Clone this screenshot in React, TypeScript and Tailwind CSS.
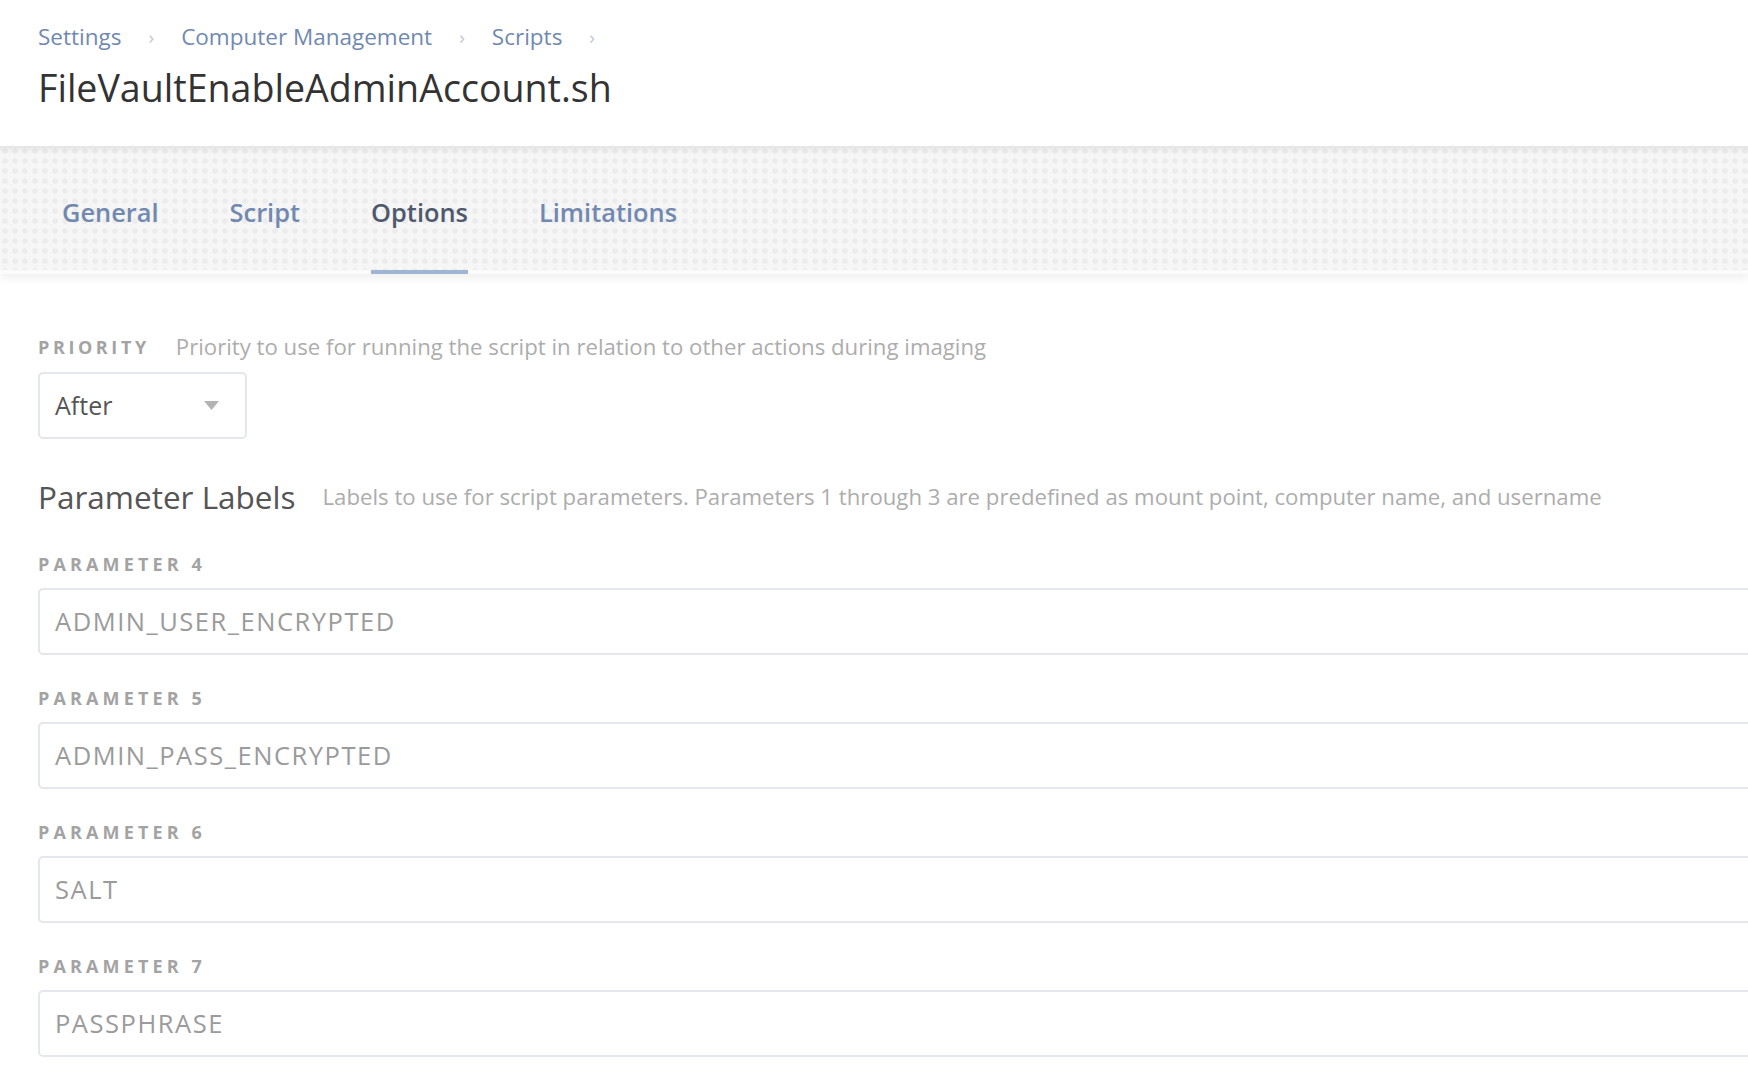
import React from 'react';

const crumbs = ['Settings', 'Computer Management', 'Scripts'];
const tabs = ['General', 'Script', 'Options', 'Limitations'];
const params = [
  { n: 4, value: 'ADMIN_USER_ENCRYPTED' },
  { n: 5, value: 'ADMIN_PASS_ENCRYPTED' },
  { n: 6, value: 'SALT' },
  { n: 7, value: 'PASSPHRASE' },
];

const App: React.FC = () => {
  return (
    <div className="w-full h-[1078px] overflow-hidden bg-white font-['Open_Sans',sans-serif]">
      {/* Header */}
      <div className="h-[146px] pl-[38px] pt-[23px] bg-white">
        <div className="flex items-center h-[28px] text-[22.5px] text-[#7189b0]">
          {crumbs.map((c) => (
            <React.Fragment key={c}>
              <span>{c}</span>
              <span className="mx-[27px] text-[19px] text-[#c4c8ce]">›</span>
            </React.Fragment>
          ))}
        </div>
        <h1 className="mt-[13px] h-[48px] leading-[48px] text-[37.6px] text-[#333333]">
          FileVaultEnableAdminAccount.sh
        </h1>
      </div>

      {/* Tabs */}
      <div className="h-[128px] flex items-end pl-[62px] gap-[71px] bg-[#f6f6f6] bg-[radial-gradient(#ececec_35%,transparent_45%)] bg-[length:10px_10px] shadow-[inset_0_8px_6px_-6px_rgba(0,0,0,0.10),inset_0_-4px_0_#fbfbfb,0_5px_8px_rgba(0,0,0,0.06)] relative">
        {tabs.map((t) => {
          const active = t === 'Options';
          return (
            <div
              key={t}
              className={
                active
                  ? 'pb-[42px] border-b-4 border-[#9eb5d3] text-[25.4px] leading-[32px] font-semibold text-[#4f596d]'
                  : 'pb-[46px] text-[25.4px] leading-[32px] font-semibold text-[#7189b0]'
              }
            >
              {t}
            </div>
          );
        })}
      </div>

      {/* Content */}
      <div className="pl-[38px] pt-[61px]">
        <div className="flex items-center h-[24px]">
          <span className="text-[18px] font-bold tracking-[0.2em] text-[#a3a3a3]">PRIORITY</span>
          <span className="ml-[26px] text-[22.2px] text-[#adadad]">
            Priority to use for running the script in relation to other actions during imaging
          </span>
        </div>

        <div className="mt-[13px] w-[209px] h-[67px] border-2 border-[#e4e7eb] rounded-[5px] flex items-center justify-between pl-[15px] pr-[26px]">
          <span className="text-[25px] text-[#555555]">After</span>
          <svg width="15" height="10" viewBox="0 0 15 10">
            <path d="M0 0 H15 L7.5 9 Z" fill="#b3b3b3" />
          </svg>
        </div>

        <div className="mt-[38px] flex items-center h-[40px]">
          <span className="text-[31.5px] text-[#555555]">Parameter Labels</span>
          <span className="ml-[27px] text-[22.2px] text-[#adadad]">
            Labels to use for script parameters. Parameters 1 through 3 are predefined as mount point, computer name, and username
          </span>
        </div>

        <div className="mt-[35px]">
          {params.map((p, i) => (
            <div key={p.n} className={i === 0 ? '' : 'mt-[31px]'}>
              <div className="h-[24px] flex items-center text-[18px] font-bold tracking-[0.23em] text-[#a3a3a3]">
                PARAMETER {p.n}
              </div>
              <div className="mt-[12px] w-[1760px] h-[67px] border-2 border-[#e4e7eb] rounded-[5px] flex items-center pl-[15px]">
                <span className="text-[25.5px] tracking-[0.06em] text-[#9b9b9b]">{p.value}</span>
              </div>
            </div>
          ))}
        </div>
      </div>
    </div>
  );
};

export default App;
